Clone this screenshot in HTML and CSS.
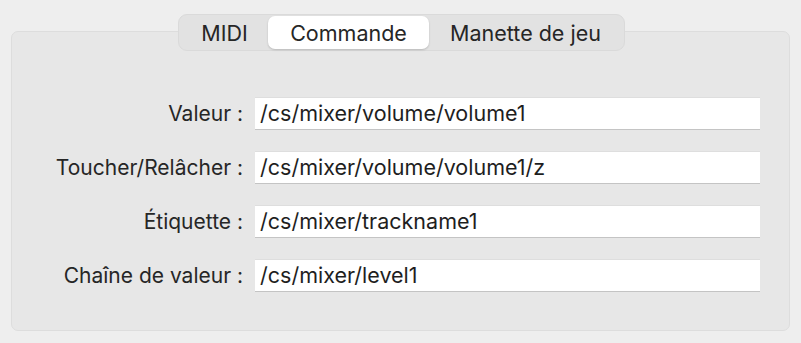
FILE: index.html
```html
<!DOCTYPE html>
<html lang="fr">
<head>
    <meta charset="UTF-8">
    <title>Commande</title>
    <link rel="stylesheet" href="styles.css">
</head>
<body>
    <div class="window">
        <div class="tabs">
            <div class="tab">MIDI</div>
            <div class="tab active">Commande</div>
            <div class="tab">Manette de jeu</div>
        </div>
        <div class="panel">
            <div class="form">
                <label class="label">Valeur :</label>
                <div class="field">/cs/mixer/volume/volume1</div>
                <label class="label">Toucher/Relâcher :</label>
                <div class="field">/cs/mixer/volume/volume1/z</div>
                <label class="label">Étiquette :</label>
                <div class="field">/cs/mixer/trackname1</div>
                <label class="label">Chaîne de valeur :</label>
                <div class="field">/cs/mixer/level1</div>
            </div>
        </div>
    </div>
</body>
</html>
```

FILE: styles.css
```css
* {
    margin: 0;
    padding: 0;
    box-sizing: border-box;
}

body {
    font-family: Inter, "Noto Sans", sans-serif;
    background: #eeeeee;
    color: #262626;
    width: 801px;
    height: 343px;
    overflow: hidden;
}

.window {
    position: relative;
    padding: 31px 11px 0 11px;
}

.tabs {
    position: absolute;
    top: 14px;
    left: 178px;
    width: 447px;
    height: 37px;
    display: flex;
    align-items: center;
    padding: 0 2px;
    background: #e2e2e2;
    border: 1px solid #dadada;
    border-radius: 9px;
    z-index: 1;
}

.tab {
    height: 33px;
    display: flex;
    align-items: center;
    justify-content: center;
    font-size: 21.5px;
    color: #262626;
    border-radius: 7px;
}

.tab:nth-child(1) { width: 87px; }
.tab:nth-child(2) { width: 161px; }
.tab:nth-child(3) { flex: 1; }

.tab.active {
    background: #ffffff;
    box-shadow: 0 1px 2px rgba(0, 0, 0, 0.18);
}

.panel {
    width: 779px;
    height: 300px;
    background: #e7e7e7;
    border: 1px solid #dddddd;
    border-radius: 7px;
    padding: 65px 0 0 0;
}

.form {
    display: grid;
    grid-template-columns: 231px 505px;
    column-gap: 12px;
    row-gap: 21px;
    align-items: center;
}

.label {
    text-align: right;
    font-size: 21px;
    color: #262626;
}

.field {
    height: 33px;
    background: #ffffff;
    border-top: 1px solid #dedede;
    border-bottom: 1.5px solid #c4c4c4;
    padding: 0 5px;
    font-size: 21.5px;
    line-height: 31px;
    color: #1e1e1e;
}
```
